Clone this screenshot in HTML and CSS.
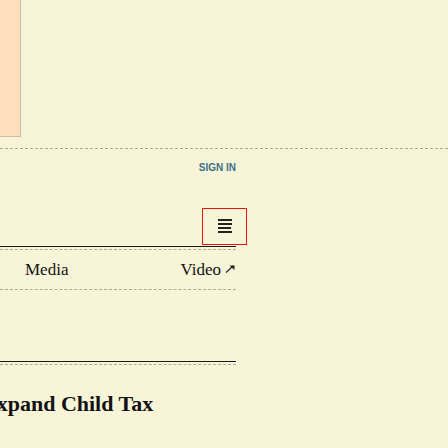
FILE: index.html
```html
<!DOCTYPE html>
<html>
<head>
<meta charset="utf-8">
<link rel="stylesheet" href="styles.css">
</head>
<body>
<div class="ad"></div>
<div class="topbar"></div>
<div class="col">
  <div class="signin-row"><a class="signin">SIGN IN</a></div>
  <div class="menu-row">
    <button class="menu-btn">
      <svg width="14" height="14" viewBox="0 0 14 14">
        <rect x="0" y="0" width="14" height="2" fill="#222"/>
        <rect x="0" y="4" width="14" height="2" fill="#222"/>
        <rect x="0" y="8" width="13" height="2" fill="#222"/>
        <rect x="0" y="12" width="14" height="2" fill="#222"/>
      </svg>
    </button>
  </div>
  <div class="rule"></div>
  <nav class="nav">
    <span class="nav-item">Media</span>
    <span class="nav-item">Video<svg class="ext" width="10" height="8" viewBox="0 0 10 8"><path d="M1 7.5 L8 1" stroke="#222" stroke-width="1.1" fill="none"/><path d="M4.5 0.5 L9.5 0.5 L9.5 5 Z" fill="#222"/></svg></span>
  </nav>
  <div class="spacer"></div>
  <div class="rule"></div>
</div>
<h1 class="headline">Expand Child Tax</h1>
</body>
</html>
```
FILE: styles.css
```css
html, body {
  margin: 0;
  padding: 0;
}
body {
  background: #f8f4d7;
  width: 448px;
  height: 448px;
  overflow: hidden;
  font-family: "Liberation Serif", serif;
  color: #121212;
}
.ad {
  width: 20px;
  height: 136px;
  background: #ffdfbd;
  border-right: 1px solid #c6bfae;
  border-bottom: 1px solid #c6bfae;
}
.topbar {
  margin-top: 11px;
  border-top: 1px dashed #aeab9c;
}
.col {
  width: 236px;
}
.signin-row {
  padding-top: 11px;
  text-align: right;
  line-height: 12px;
}
.signin {
  font-family: "Liberation Sans", Arial, sans-serif;
  font-weight: bold;
  font-size: 10px;
  color: #3e6e84;
}
.menu-row {
  padding-top: 34px;
  margin-bottom: 1px;
}
.menu-btn {
  display: flex;
  align-items: center;
  justify-content: center;
  margin: 0 0 0 202px;
  padding: 0 0 1px 0;
  width: 45px;
  height: 37px;
  border: 1px solid #e8130f;
  background: transparent;
  box-sizing: border-box;
}
.menu-btn svg {
  display: block;
}
.rule {
  border-top: 1px solid #1a1a1a;
  padding-top: 2px;
}
.rule::after {
  content: "";
  display: block;
  border-top: 1px dashed #aeab9c;
}
.nav {
  display: flex;
  justify-content: space-between;
  padding: 10px 1px 9px 25px;
  border-bottom: 1px dashed #aeab9c;
  font-size: 17px;
  line-height: 20px;
}
.nav-item {
  display: flex;
  align-items: center;
}
.ext {
  margin-left: 4px;
  margin-top: -3px;
}
.spacer {
  height: 71px;
}
.headline {
  margin: 26px 0 0 -18px;
  font-family: "Liberation Serif", serif;
  font-weight: bold;
  font-size: 22px;
  line-height: 26px;
  color: #121212;
}
```
